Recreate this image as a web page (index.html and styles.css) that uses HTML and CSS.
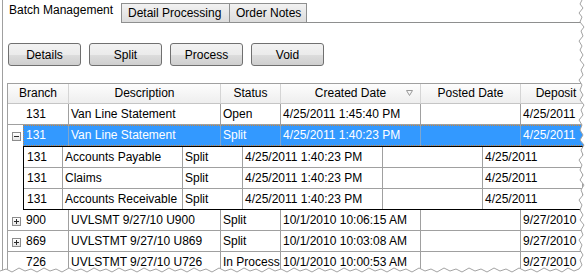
FILE: index.html
```html
<!DOCTYPE html>
<html lang="en">
	<head>
		<meta charset="UTF-8" />
		<meta name="viewport" content="width=device-width, initial-scale=1.0" />
		<title>Batch Management</title>
		<link rel="stylesheet" href="styles.css">
	</head>
	<body>
		<div class="frame">
			<div class="tabs">
				<div class="tab active">Batch Management</div>
				<div class="tab">Detail Processing</div>
				<div class="tab">Order Notes</div>
				<div class="tab-fill"></div>
			</div>

			<div class="panel">
				<div class="toolbar">
					<button>Details</button>
					<button>Split</button>
					<button>Process</button>
					<button>Void</button>
				</div>

				<div class="grid">
					<div class="row head">
						<div class="cell c-hbr">Branch</div>
						<div class="cell c-desc">Description</div>
						<div class="cell c-st">Status</div>
						<div class="cell c-cr">Created Date
							<svg class="sort" width="7" height="6" viewBox="0 0 7 6"><path d="M0.5 0.5 H6.5 L3.5 5.5 Z" fill="none" stroke="#9a9a9a" stroke-width="1"/></svg>
						</div>
						<div class="cell c-po">Posted Date</div>
						<div class="cell c-de">Deposit</div>
					</div>

					<div class="row">
						<div class="cell c-exp"></div>
						<div class="cell c-br">131</div>
						<div class="cell c-desc">Van Line Statement</div>
						<div class="cell c-st">Open</div>
						<div class="cell c-cr">4/25/2011 1:45:40 PM</div>
						<div class="cell c-po"></div>
						<div class="cell c-de">4/25/2011</div>
					</div>

					<div class="row sel">
						<div class="cell c-exp no-line"><span class="exp minus"></span></div>
						<div class="sel-cells">
							<div class="cell c-br">131</div>
							<div class="cell c-desc">Van Line Statement</div>
							<div class="cell c-st">Split</div>
							<div class="cell c-cr">4/25/2011 1:40:23 PM</div>
							<div class="cell c-po"></div>
							<div class="cell c-de">4/25/2011</div>
						</div>
					</div>

					<div class="child">
						<div class="c-exp"></div>
						<div class="ctable">
							<div class="crow">
								<div class="cell k-br">131</div>
								<div class="cell k-desc">Accounts Payable</div>
								<div class="cell k-st">Split</div>
								<div class="cell k-cr">4/25/2011 1:40:23 PM</div>
								<div class="cell k-po"></div>
								<div class="cell k-de">4/25/2011</div>
							</div>
							<div class="crow">
								<div class="cell k-br">131</div>
								<div class="cell k-desc">Claims</div>
								<div class="cell k-st">Split</div>
								<div class="cell k-cr">4/25/2011 1:40:23 PM</div>
								<div class="cell k-po"></div>
								<div class="cell k-de">4/25/2011</div>
							</div>
							<div class="crow">
								<div class="cell k-br">131</div>
								<div class="cell k-desc">Accounts Receivable</div>
								<div class="cell k-st">Split</div>
								<div class="cell k-cr">4/25/2011 1:40:23 PM</div>
								<div class="cell k-po"></div>
								<div class="cell k-de">4/25/2011</div>
							</div>
						</div>
					</div>

					<div class="row">
						<div class="cell c-exp"><span class="exp plus"></span></div>
						<div class="cell c-br">900</div>
						<div class="cell c-desc">UVLSMT 9/27/10 U900</div>
						<div class="cell c-st">Split</div>
						<div class="cell c-cr">10/1/2010 10:06:15 AM</div>
						<div class="cell c-po"></div>
						<div class="cell c-de">9/27/2010</div>
					</div>

					<div class="row">
						<div class="cell c-exp"><span class="exp plus"></span></div>
						<div class="cell c-br">869</div>
						<div class="cell c-desc">UVLSTMT 9/27/10 U869</div>
						<div class="cell c-st">Split</div>
						<div class="cell c-cr">10/1/2010 10:03:08 AM</div>
						<div class="cell c-po"></div>
						<div class="cell c-de">9/27/2010</div>
					</div>

					<div class="row">
						<div class="cell c-exp"></div>
						<div class="cell c-br">726</div>
						<div class="cell c-desc">UVLSTMT 9/27/10 U726</div>
						<div class="cell c-st">In Process</div>
						<div class="cell c-cr">10/1/2010 10:00:53 AM</div>
						<div class="cell c-po"></div>
						<div class="cell c-de">9/27/2010</div>
					</div>
				</div>
			</div>

			<!-- torn paper edge over the right and bottom of the shot -->
			<svg class="torn" width="586" height="274" viewBox="0 0 586 274">
				<path fill="#fff" d="M582 0 L580 4 L583 8 L579 13 L582 17 L580 22 L584 27 L581 31 L583 36 L579 41 L582 46 L580 50 L583 55 L580 60 L584 65 L581 70 L583 75 L579 80 L582 85 L580 90 L583 95 L580 100 L584 105 L581 110 L583 115 L579 120 L582 125 L580 130 L583 135 L580 140 L584 145 L581 150 L583 155 L579 160 L582 165 L580 170 L583 175 L580 180 L584 185 L581 190 L583 195 L579 200 L582 205 L580 210 L583 215 L580 220 L584 225 L581 230 L583 235 L579 240 L582 245 L580 250 L583 255 L580 260 L582 265 L579 269 L574 271 L568 268 L562 272 L556 269 L550 271 L544 268 L537 272 L531 269 L525 271 L519 268 L512 272 L506 269 L500 271 L494 268 L487 272 L481 269 L475 271 L469 268 L462 272 L456 269 L450 271 L444 268 L437 272 L431 269 L425 271 L419 268 L412 272 L406 269 L400 271 L394 268 L387 272 L381 269 L375 271 L369 268 L362 272 L356 269 L350 271 L344 268 L337 272 L331 269 L325 271 L319 268 L312 272 L306 269 L300 271 L294 268 L287 272 L281 269 L275 271 L269 268 L262 272 L256 269 L250 271 L244 268 L237 272 L231 269 L225 271 L219 268 L212 272 L206 269 L200 271 L194 268 L187 272 L181 269 L175 271 L169 268 L162 272 L156 269 L150 271 L144 268 L137 272 L131 269 L125 271 L119 268 L112 272 L106 269 L100 271 L94 268 L87 272 L81 269 L75 271 L69 268 L62 272 L56 269 L50 271 L44 268 L37 272 L31 269 L25 271 L19 268 L12 272 L6 269 L0 271 L0 274 L586 274 L586 0 Z"/>
				<path fill="none" stroke="#a3a3a3" stroke-width="1" d="M582 0 L580 4 L583 8 L579 13 L582 17 L580 22 L584 27 L581 31 L583 36 L579 41 L582 46 L580 50 L583 55 L580 60 L584 65 L581 70 L583 75 L579 80 L582 85 L580 90 L583 95 L580 100 L584 105 L581 110 L583 115 L579 120 L582 125 L580 130 L583 135 L580 140 L584 145 L581 150 L583 155 L579 160 L582 165 L580 170 L583 175 L580 180 L584 185 L581 190 L583 195 L579 200 L582 205 L580 210 L583 215 L580 220 L584 225 L581 230 L583 235 L579 240 L582 245 L580 250 L583 255 L580 260 L582 265 L579 269 L574 271 L568 268 L562 272 L556 269 L550 271 L544 268 L537 272 L531 269 L525 271 L519 268 L512 272 L506 269 L500 271 L494 268 L487 272 L481 269 L475 271 L469 268 L462 272 L456 269 L450 271 L444 268 L437 272 L431 269 L425 271 L419 268 L412 272 L406 269 L400 271 L394 268 L387 272 L381 269 L375 271 L369 268 L362 272 L356 269 L350 271 L344 268 L337 272 L331 269 L325 271 L319 268 L312 272 L306 269 L300 271 L294 268 L287 272 L281 269 L275 271 L269 268 L262 272 L256 269 L250 271 L244 268 L237 272 L231 269 L225 271 L219 268 L212 272 L206 269 L200 271 L194 268 L187 272 L181 269 L175 271 L169 268 L162 272 L156 269 L150 271 L144 268 L137 272 L131 269 L125 271 L119 268 L112 272 L106 269 L100 271 L94 268 L87 272 L81 269 L75 271 L69 268 L62 272 L56 269 L50 271 L44 268 L37 272 L31 269 L25 271 L19 268 L12 272 L6 269 L0 271"/>
			</svg>
		</div>
	</body>
</html>
```

FILE: styles.css
```css
body {
	margin: 0;
	background: #fff;
	font-family: 'Liberation Sans', Arial, sans-serif;
	font-size: 12px;
	color: #000;
}
.frame {
	position: relative;
	width: 586px;
	height: 274px;
	overflow: hidden;
	padding-left: 2px;
	box-sizing: border-box;
}
.tabs {
	display: flex;
	align-items: flex-end;
	height: 23px;
}
.tab {
	box-sizing: border-box;
	height: 20px;
	line-height: 18px;
	padding-left: 6px;
	border: 1px solid #8e8f8f;
	background: linear-gradient(#f2f2f2, #dcdcdc);
	white-space: nowrap;
}
.tab + .tab {
	margin-left: -1px;
}
.tab:nth-child(2) {
	width: 109px;
	margin-left: 0;
}
.tab:nth-child(3) {
	width: 78px;
}
.tab.active {
	width: 119px;
	height: 23px;
	line-height: 15px;
	padding-top: 3px;
	border: none;
	border-left: 1px solid #a0a0a0;
	background: #fff;
}
.tab-fill {
	flex: 1;
	height: 23px;
	box-sizing: border-box;
	border-bottom: 1px solid #8e8f8f;
}
.panel {
	border-left: 1px solid #a0a0a0;
	padding: 20px 0 0 4px;
	height: 251px;
	box-sizing: border-box;
}
.toolbar {
	display: flex;
	gap: 8px;
	margin-left: 1px;
}
button {
	width: 73px;
	height: 23px;
	padding: 0;
	font-family: inherit;
	font-size: 12px;
	color: #000;
	border: 1px solid #707070;
	border-radius: 3px;
	background: linear-gradient(#f2f2f2 0%, #ebebeb 50%, #dddddd 51%, #cfcfcf 100%);
}
.grid {
	margin-top: 17px;
	border-left: 1px solid #a0a0a0;
	border-top: 1px solid #a0a0a0;
	width: 700px;
}
.row,
.crow,
.sel-cells,
.child {
	display: flex;
}
.cell {
	flex: none;
	box-sizing: border-box;
	height: 21px;
	line-height: 20px;
	padding-left: 2px;
	border-right: 1px solid #a0a0a0;
	border-bottom: 1px solid #a0a0a0;
	white-space: nowrap;
	overflow: hidden;
}
.head .cell {
	height: 20px;
	line-height: 19px;
	padding-left: 0;
	text-align: center;
	border-right-color: #d5d5d5;
	border-bottom-color: #c5c5c5;
	background: linear-gradient(#fdfdfd, #eeeeee);
	position: relative;
}
.sort {
	position: absolute;
	right: 7px;
	top: 6px;
}
.c-exp {
	width: 15px;
	border-right: none;
	padding: 0;
	flex: none;
}
.c-exp.no-line {
	border-bottom: none;
}
.c-hbr { width: 61px; }
.c-br { width: 46px; padding-left: 3px; }
.c-desc { width: 152px; }
.c-st { width: 60px; }
.c-cr { width: 140px; }
.c-po { width: 100px; }
.c-de { width: 71px; }

.exp {
	display: block;
	position: relative;
	width: 9px;
	height: 9px;
	box-sizing: border-box;
	margin: 7px 0 0 4px;
	border: 1px solid #8c8c8c;
	background: linear-gradient(#ffffff, #e4e4e4);
}
.exp::before,
.exp::after {
	content: '';
	position: absolute;
	background: #2b2b2b;
}
.exp::before {
	left: 1px;
	top: 3px;
	width: 5px;
	height: 1px;
}
.plus::after {
	left: 3px;
	top: 1px;
	width: 1px;
	height: 5px;
}
.sel-cells {
	background: #3399ff;
	color: #fff;
	outline: 1px dotted #c8843c;
	outline-offset: -1px;
}
.sel-cells .cell {
	border-right-color: #7ea6cf;
	border-bottom: none;
}
.ctable {
	border-left: 1px solid #000;
	border-top: 1px solid #000;
	border-bottom: 1px solid #000;
}
.crow:last-child .cell {
	border-bottom: none;
	height: 20px;
}
.k-br { width: 39px; padding-left: 3px; }
.k-desc { width: 120px; }
.k-st { width: 60px; }
.k-cr { width: 140px; }
.k-po { width: 100px; }
.k-de { width: 100px; }

.torn {
	position: absolute;
	top: 0;
	left: 0;
	pointer-events: none;
}
```
